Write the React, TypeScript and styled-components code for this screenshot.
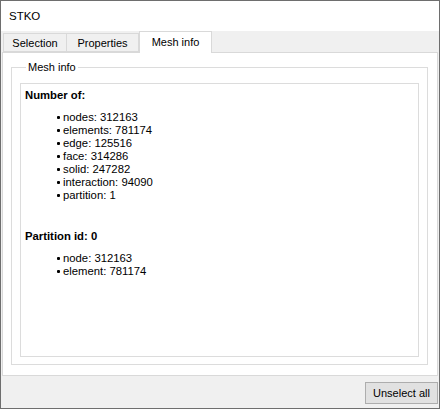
import React from "react";
import styled, { createGlobalStyle } from "styled-components";

const GlobalStyle = createGlobalStyle`
  html, body {
    margin: 0;
    padding: 0;
    background: #ffffff;
  }
  * {
    box-sizing: border-box;
  }
`;

const Window = styled.div`
  width: 440px;
  height: 409px;
  border: 1px solid #6e6e6e;
  background-color: #f0f0f0;
  display: flex;
  flex-direction: column;
  font-family: "Liberation Sans", Arial, sans-serif;
  font-size: 11px;
  color: #000000;
`;

const TitleBar = styled.div`
  height: 30px;
  background-color: #ffffff;
  display: flex;
  align-items: center;
  padding-left: 8px;
  font-size: 11.5px;
`;

const TabArea = styled.div`
  flex: 1;
  display: flex;
  flex-direction: column;
  padding: 0 1px;
`;

const TabBar = styled.div`
  height: 21px;
  display: flex;
  align-items: flex-end;
  padding-left: 1px;
`;

const Tab = styled.div<{ $active?: boolean; $first?: boolean; $width: number }>`
  width: ${(p) => p.$width}px;
  height: ${(p) => (p.$active ? 22 : 19)}px;
  margin-bottom: ${(p) => (p.$active ? -1 : 0)}px;
  border: 1px solid #d9d9d9;
  border-bottom: ${(p) => (p.$active ? "none" : "1px solid #d9d9d9")};
  border-left: ${(p) => (p.$first || p.$active ? "1px solid #d9d9d9" : "none")};
  background-color: ${(p) => (p.$active ? "#ffffff" : "#f0f0f0")};
  display: flex;
  align-items: center;
  justify-content: center;
  padding-bottom: ${(p) => (p.$active ? 2 : 0)}px;
  position: relative;
  z-index: ${(p) => (p.$active ? 1 : 0)};
`;

const Panel = styled.div`
  flex: 1;
  background-color: #ffffff;
  border: 1px solid #d9d9d9;
  display: flex;
  flex-direction: column;
`;

const GroupBox = styled.fieldset`
  flex: 1;
  margin: 7px 9px 10px 8px;
  padding: 9px 8px 7px 8px;
  border: 1px solid #dcdcdc;
  display: flex;
  flex-direction: column;
  min-width: 0;
`;

const GroupTitle = styled.legend`
  margin-left: 6px;
  padding: 0 2px;
  line-height: 14px;
`;

const TextBox = styled.div`
  flex: 1;
  border: 1px solid #dcdcdc;
  background-color: #ffffff;
  padding: 5px 4px;
  font-size: 11.3px;
  line-height: 13px;
`;

const Heading = styled.div<{ $gap?: number }>`
  font-weight: 700;
  margin-top: ${(p) => p.$gap ?? 0}px;
`;

const List = styled.ul`
  list-style: none;
  margin: 9px 0 0 0;
  padding-left: 38px;
`;

const Item = styled.li`
  position: relative;
  &::before {
    content: "";
    position: absolute;
    left: -6px;
    top: 5px;
    width: 3px;
    height: 3px;
    border-radius: 1px;
    background-color: #000000;
  }
`;

const Footer = styled.div`
  height: 32px;
  display: flex;
  align-items: center;
  justify-content: flex-end;
  padding: 0 1px 0 0;
`;

const Button = styled.button`
  width: 73px;
  height: 22px;
  border: 1px solid #adadad;
  background-color: #e1e1e1;
  font-family: inherit;
  font-size: 11px;
  color: #000000;
  padding: 0;
  margin-top: 2px;
`;

const counts = [
  "nodes: 312163",
  "elements: 781174",
  "edge: 125516",
  "face: 314286",
  "solid: 247282",
  "interaction: 94090",
  "partition: 1",
];

const partition = ["node: 312163", "element: 781174"];

export default function App() {
  return (
    <>
      <GlobalStyle />
      <Window>
        <TitleBar>STKO</TitleBar>
        <TabArea>
          <TabBar>
            <Tab $width={64} $first>
              Selection
            </Tab>
            <Tab $width={72}>Properties</Tab>
            <Tab $width={73} $active>
              Mesh info
            </Tab>
          </TabBar>
          <Panel>
            <GroupBox>
              <GroupTitle>Mesh info</GroupTitle>
              <TextBox>
                <Heading>Number of:</Heading>
                <List>
                  {counts.map((c) => (
                    <Item key={c}>{c}</Item>
                  ))}
                </List>
                <Heading $gap={28}>Partition id: 0</Heading>
                <List>
                  {partition.map((c) => (
                    <Item key={c}>{c}</Item>
                  ))}
                </List>
              </TextBox>
            </GroupBox>
          </Panel>
        </TabArea>
        <Footer>
          <Button>Unselect all</Button>
        </Footer>
      </Window>
    </>
  );
}
